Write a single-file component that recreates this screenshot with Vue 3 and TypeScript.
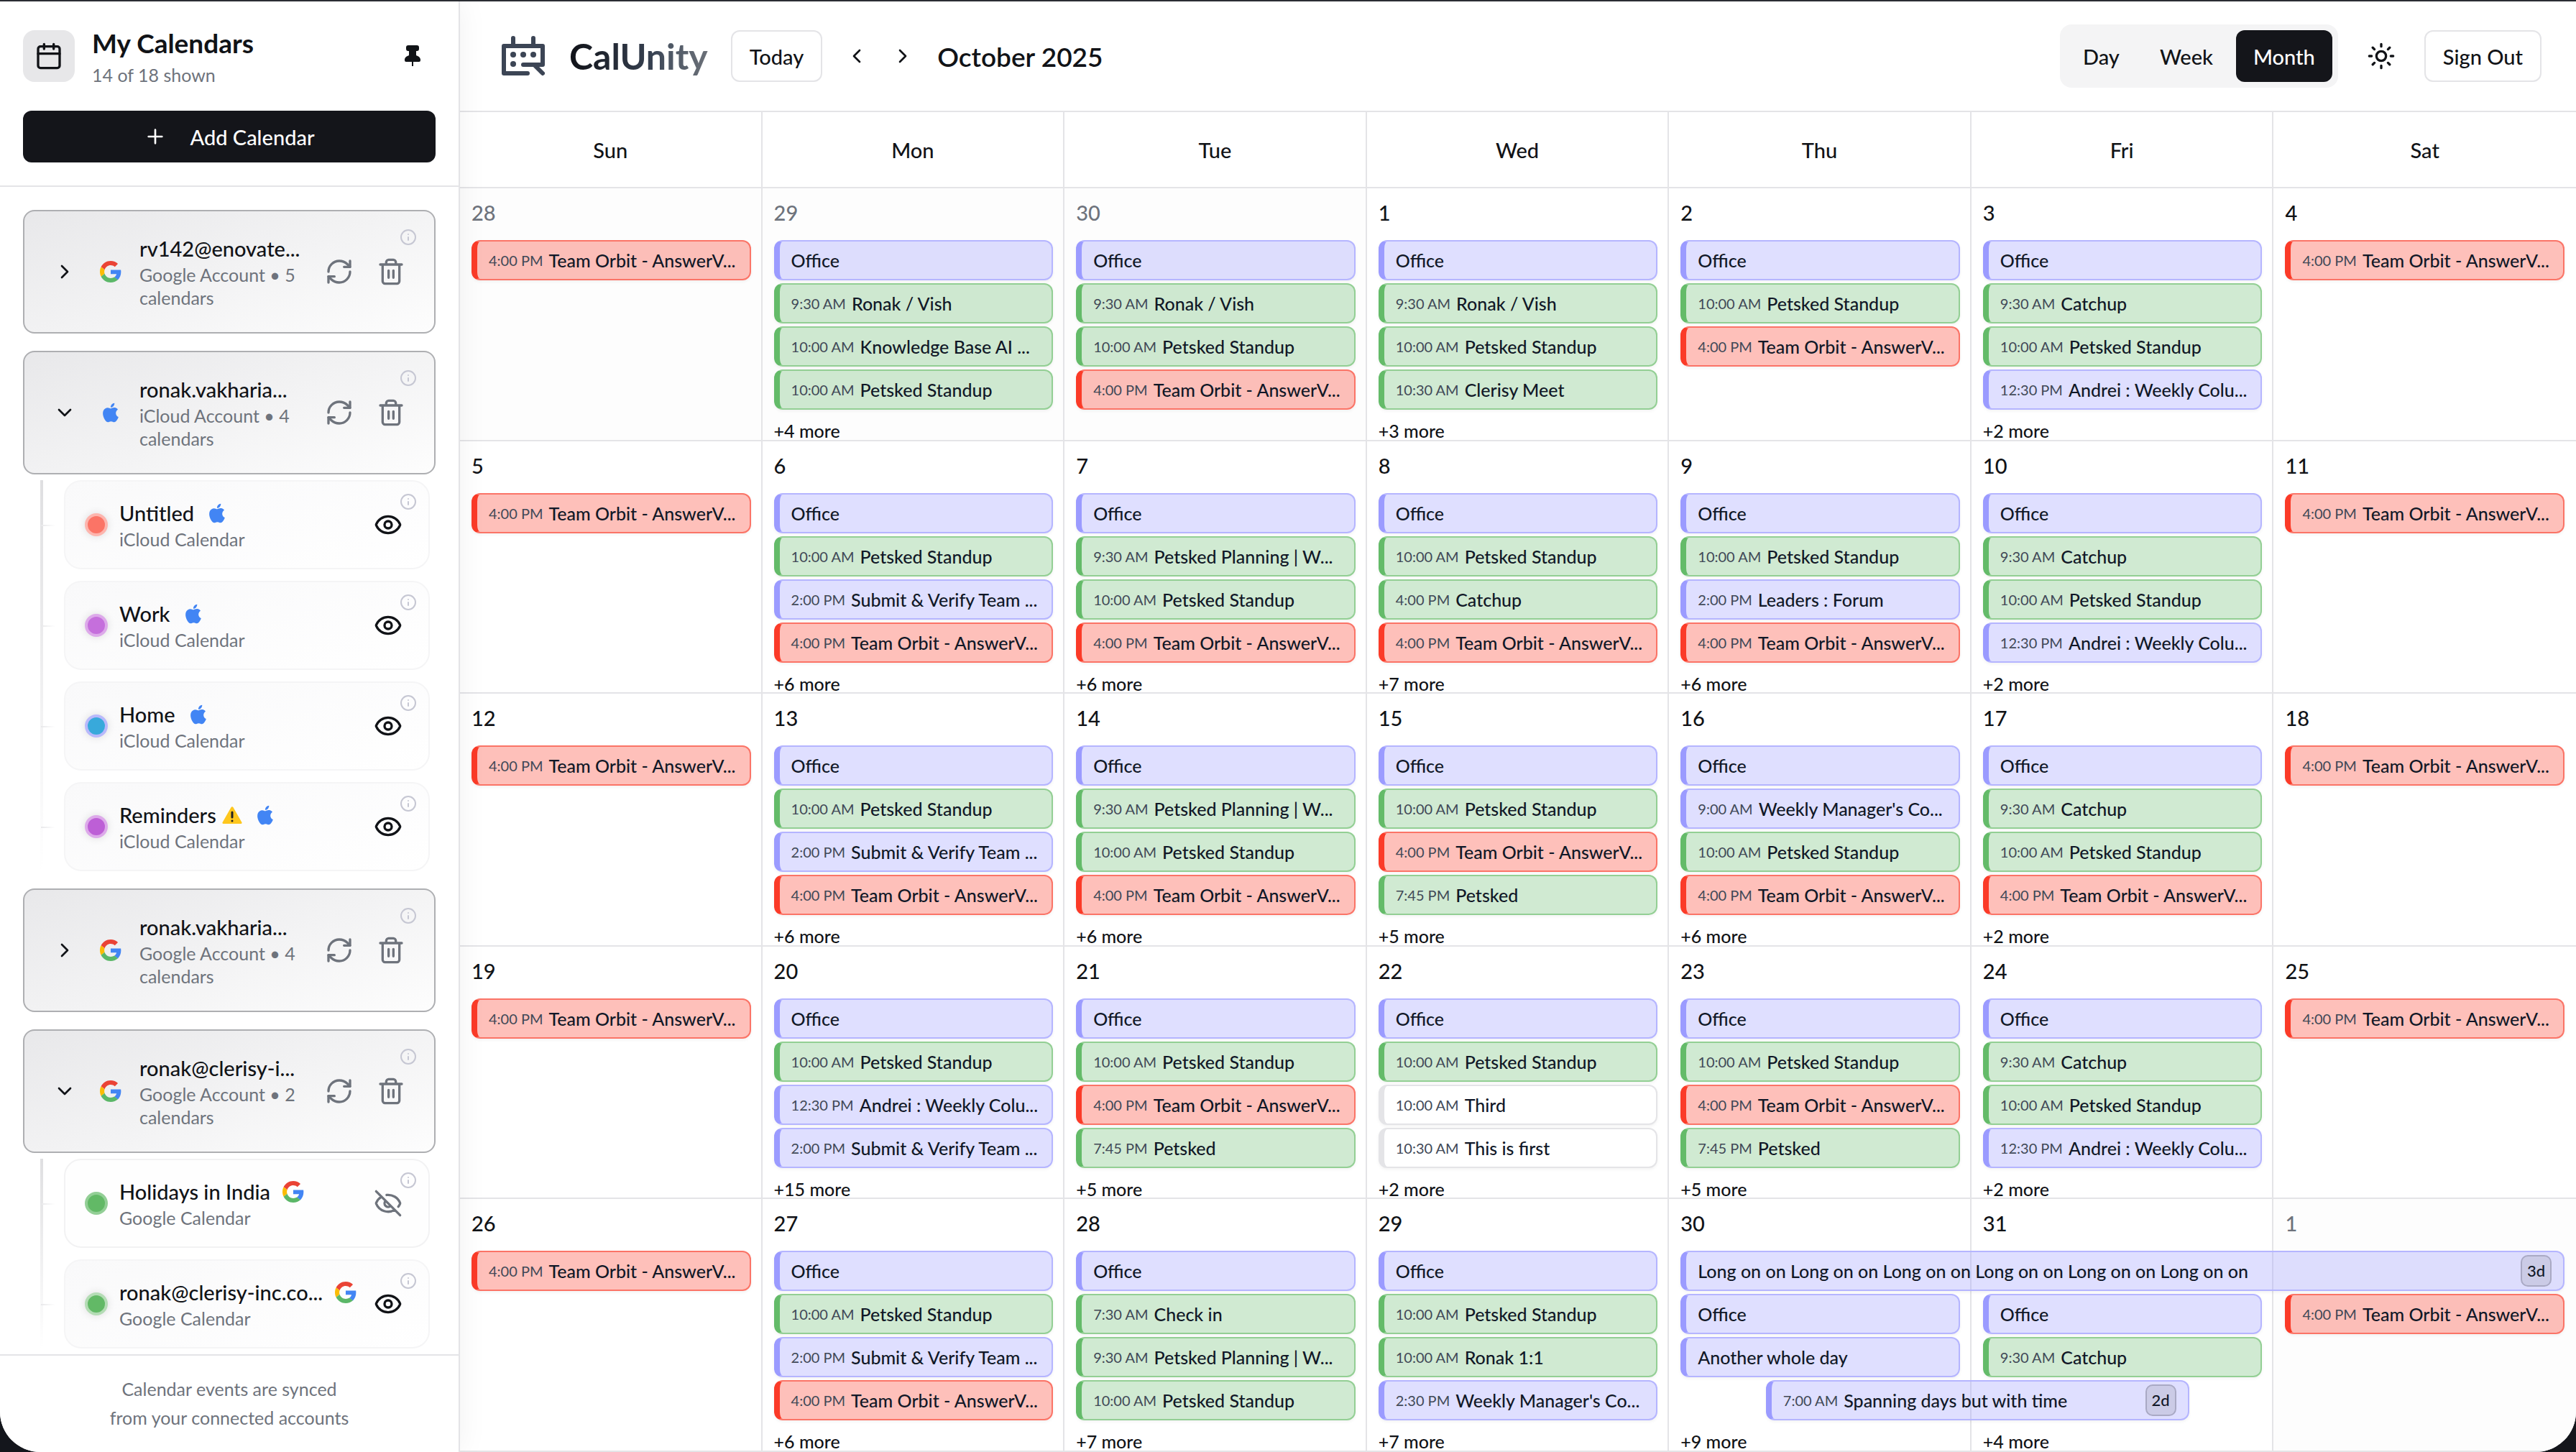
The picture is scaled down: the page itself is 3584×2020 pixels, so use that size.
<script setup lang="ts">
type Tone = 'red' | 'violet' | 'green' | 'plain'
type Provider = 'google' | 'apple'

interface CalendarEvent {
  title: string
  time?: string
  tone: Tone
  col: number
  row: number
  span?: number
  badge?: string
  partial?: boolean
}
interface Day {
  label: string
  more?: string
  outside?: boolean
}
interface Week {
  days: Day[]
  events: CalendarEvent[]
}
interface SubCalendar {
  name: string
  kind: string
  provider: Provider
  color: string
  halo: string
  visible: boolean
  warning?: boolean
}
interface Account {
  name: string
  detail: string
  provider: Provider
  open: boolean
  calendars: SubCalendar[]
}

const apple = (name: string, color: string, halo: string, warning = false): SubCalendar => ({
  name, kind: 'iCloud Calendar', provider: 'apple', color, halo, visible: true, warning,
})

const accounts: Account[] = [
  { name: 'rv142@enovate...', detail: 'Google Account • 5 calendars', provider: 'google', open: false, calendars: [] },
  {
    name: 'ronak.vakharia...', detail: 'iCloud Account • 4 calendars', provider: 'apple', open: true,
    calendars: [
      apple('Untitled', '#fb7466', '#fdb5ae'),
      apple('Work', '#c56fdc', '#dda9ea'),
      apple('Home', '#38a9db', '#b9b9fb'),
      apple('Reminders', '#bd5fd6', '#dda9ea', true),
    ],
  },
  { name: 'ronak.vakharia...', detail: 'Google Account • 4 calendars', provider: 'google', open: false, calendars: [] },
  {
    name: 'ronak@clerisy-i...', detail: 'Google Account • 2 calendars', provider: 'google', open: true,
    calendars: [
      { name: 'Holidays in India', kind: 'Google Calendar', provider: 'google', color: '#62b966', halo: '#93cf96', visible: false },
      { name: 'ronak@clerisy-inc.co...', kind: 'Google Calendar', provider: 'google', color: '#62b966', halo: '#b4dcb5', visible: true },
    ],
  },
]

const weekdays = ['Sun', 'Mon', 'Tue', 'Wed', 'Thu', 'Fri', 'Sat']
const views = ['Day', 'Week', 'Month']

const tones: Record<string, Tone> = { r: 'red', v: 'violet', g: 'green', p: 'plain' }

// Each entry reads "tone|time|title"; an all-day entry leaves the time empty.
// Only the first two bars separate fields, so a title may hold one itself.
const column = (col: number, lines: string[], firstRow = 2): CalendarEvent[] =>
  lines.map((line, i) => {
    const [tone, time, ...title] = line.split('|')
    return { tone: tones[tone], time, title: title.join('|'), col, row: firstRow + i }
  })

const parse = (lists: string[][]): CalendarEvent[] => lists.flatMap((list, i) => column(i + 1, list))

const office = 'v||Office'
const orbit = 'r|4:00 PM|Team Orbit - AnswerV...'
const standup = 'g|10:00 AM|Petsked Standup'
const vish = 'g|9:30 AM|Ronak / Vish'
const verify = 'v|2:00 PM|Submit & Verify Team ...'
const planning = 'g|9:30 AM|Petsked Planning | W...'
const catchup = 'g|9:30 AM|Catchup'
const andrei = 'v|12:30 PM|Andrei : Weekly Colu...'
const petsked = 'g|7:45 PM|Petsked'

const days = (first: number, more: string[]): Day[] =>
  more.map((text, i) => ({ label: String(first + i), more: text ? `+${text} more` : undefined }))

const weeks: Week[] = [
  {
    days: [
      { label: '28', outside: true },
      { label: '29', outside: true, more: '+4 more' },
      { label: '30', outside: true },
      ...days(1, ['3', '', '2', '']),
    ],
    events: parse([
      [orbit],
      [office, vish, 'g|10:00 AM|Knowledge Base AI ...', standup],
      [office, vish, standup, orbit],
      [office, vish, standup, 'g|10:30 AM|Clerisy Meet'],
      [office, standup, orbit],
      [office, catchup, standup, andrei],
      [orbit],
    ]),
  },
  {
    days: days(5, ['', '6', '6', '7', '6', '2', '']),
    events: parse([
      [orbit],
      [office, standup, verify, orbit],
      [office, planning, standup, orbit],
      [office, standup, 'g|4:00 PM|Catchup', orbit],
      [office, standup, 'v|2:00 PM|Leaders : Forum', orbit],
      [office, catchup, standup, andrei],
      [orbit],
    ]),
  },
  {
    days: days(12, ['', '6', '6', '5', '6', '2', '']),
    events: parse([
      [orbit],
      [office, standup, verify, orbit],
      [office, planning, standup, orbit],
      [office, standup, orbit, petsked],
      [office, "v|9:00 AM|Weekly Manager's Co...", standup, orbit],
      [office, catchup, standup, orbit],
      [orbit],
    ]),
  },
  {
    days: days(19, ['', '15', '5', '2', '5', '2', '']),
    events: parse([
      [orbit],
      [office, standup, andrei, verify],
      [office, standup, orbit, petsked],
      [office, standup, 'p|10:00 AM|Third', 'p|10:30 AM|This is first'],
      [office, standup, orbit, petsked],
      [office, catchup, standup, andrei],
      [orbit],
    ]),
  },
  {
    days: [...days(26, ['', '6', '7', '7', '9', '4']), { label: '1', outside: true }],
    events: [
      ...parse([
        [orbit],
        [office, standup, verify, orbit],
        [office, 'g|7:30 AM|Check in', planning, standup],
        [office, standup, 'g|10:00 AM|Ronak 1:1', "v|2:30 PM|Weekly Manager's Co..."],
      ]),
      { tone: 'violet', title: 'Long on on Long on on Long on on Long on on Long on on Long on on', col: 5, row: 2, span: 3, badge: '3d' },
      ...column(5, [office, 'v||Another whole day'], 3),
      ...column(6, [office, catchup], 3),
      ...column(7, [orbit], 3),
      { tone: 'violet', time: '7:00 AM', title: 'Spanning days but with time', col: 5, row: 5, span: 2, badge: '2d', partial: true },
    ],
  },
]
</script>

<template>
  <div class="window">
    <aside class="sidebar">
      <header class="side-head">
        <div class="side-title">
          <span class="title-icon">
            <svg class="i40" viewBox="0 0 24 24"><rect x="3" y="4" width="18" height="18" rx="2" /><path d="M3 10h18M8 2v4M16 2v4" /></svg>
          </span>
          <div class="title-text">
            <h2>My Calendars</h2>
            <p>14 of 18 shown</p>
          </div>
          <button class="pin" aria-label="Pin sidebar">
            <svg viewBox="0 0 22 30"><path d="M5 0h12a3 3 0 0 1 3 3v2a3 3 0 0 1-3 3h-1v6c3 1 6 3 6 6v1a2 2 0 0 1-2 2H2a2 2 0 0 1-2-2v-1c0-3 3-5 6-6V8H5a3 3 0 0 1-3-3V3a3 3 0 0 1 3-3z" /><path d="M10 22h2v7h-2z" /></svg>
          </button>
        </div>
        <button class="add">
          <svg class="i32" viewBox="0 0 24 24"><path d="M5 12h14M12 5v14" /></svg>
          <span>Add Calendar</span>
        </button>
      </header>

      <div class="accounts">
        <section v-for="(account, a) in accounts" :key="a">
          <div class="account">
            <button class="toggle" aria-label="Toggle account">
              <svg class="i32" viewBox="0 0 24 24"><path :d="account.open ? 'm6 9 6 6 6-6' : 'm9 18 6-6-6-6'" /></svg>
            </button>
            <span class="brand">
              <svg v-if="account.provider === 'google'" class="google" viewBox="0 0 48 48"><path fill="#ea4335" d="M24 9.5c3.54 0 6.71 1.22 9.21 3.6l6.85-6.85C35.9 2.38 30.47 0 24 0 14.62 0 6.51 5.38 2.56 13.22l7.98 6.19C12.43 13.72 17.74 9.5 24 9.5z" /><path fill="#4285f4" d="M46.98 24.55c0-1.57-.15-3.09-.38-4.55H24v9.02h12.94c-.58 2.96-2.26 5.48-4.78 7.18l7.73 6c4.51-4.18 7.09-10.36 7.09-17.65z" /><path fill="#fbbc05" d="M10.53 28.59c-.48-1.45-.76-2.99-.76-4.59s.27-3.14.76-4.59l-7.98-6.19C.92 16.46 0 20.12 0 24c0 3.88.92 7.54 2.56 10.78l7.97-6.19z" /><path fill="#5bb768" d="M24 48c6.48 0 11.93-2.13 15.89-5.81l-7.73-6c-2.15 1.45-4.92 2.3-8.16 2.3-6.26 0-11.57-4.22-13.47-9.91l-7.98 6.19C6.51 42.62 14.62 48 24 48z" /></svg>
              <svg v-else class="apple" viewBox="0 0 24 24"><path d="M18.71 19.5c-.83 1.24-1.71 2.45-3.05 2.47-1.34.03-1.77-.79-3.29-.79-1.53 0-2 .77-3.27.82-1.31.05-2.3-1.32-3.14-2.53C4.25 17 2.94 12.45 4.7 9.39c.87-1.52 2.43-2.48 4.12-2.51 1.28-.02 2.5.87 3.29.87.78 0 2.26-1.07 3.81-.91.65.03 2.47.26 3.64 1.98-.09.06-2.17 1.28-2.15 3.81.03 3.02 2.65 4.03 2.68 4.04-.03.07-.42 1.44-1.38 2.83M13 3.5c.73-.83 1.94-1.46 2.94-1.5.13 1.17-.34 2.35-1.04 3.19-.69.85-1.83 1.51-2.95 1.42-.15-1.15.41-2.35 1.05-3.11z" /></svg>
            </span>
            <div class="account-text">
              <h3>{{ account.name }}</h3>
              <p>{{ account.detail }}</p>
            </div>
            <button class="icon-btn" aria-label="Refresh account">
              <svg class="i40" viewBox="0 0 24 24"><path d="M3 12a9 9 0 0 1 9-9 9.75 9.75 0 0 1 6.74 2.74L21 8" /><path d="M21 3v5h-5" /><path d="M21 12a9 9 0 0 1-9 9 9.75 9.75 0 0 1-6.74-2.74L3 16" /><path d="M8 16H3v5" /></svg>
            </button>
            <button class="icon-btn" aria-label="Remove account">
              <svg class="i40" viewBox="0 0 24 24"><path d="M3 6h18M19 6v14c0 1-1 2-2 2H7c-1 0-2-1-2-2V6M8 6V4c0-1 1-2 2-2h4c1 0 2 1 2 2v2M10 11v6M14 11v6" /></svg>
            </button>
            <svg class="info" viewBox="0 0 24 24"><circle cx="12" cy="12" r="10" /><path d="M12 16v-4M12 8h.01" /></svg>
          </div>
          <ul v-if="account.open" class="children">
            <li v-for="cal in account.calendars" :key="cal.name" class="child" :class="{ muted: !cal.visible }">
              <span class="dot" :style="{ background: cal.color, borderColor: cal.halo }"></span>
              <div class="child-text">
                <div class="child-name">
                  <span>{{ cal.name }}</span>
                  <svg v-if="cal.warning" class="warning" viewBox="0 0 28 24"><path fill="#fec71e" d="M12.6 1a1.6 1.6 0 0 1 2.8 0l12 21a1.3 1.3 0 0 1-1.2 2H1.8a1.3 1.3 0 0 1-1.2-2z" /><path stroke="#222" stroke-width="3" stroke-linecap="round" d="M14 8v7M14 20h.01" /></svg>
                  <span class="brand">
                    <svg v-if="cal.provider === 'google'" class="google" viewBox="0 0 48 48"><path fill="#ea4335" d="M24 9.5c3.54 0 6.71 1.22 9.21 3.6l6.85-6.85C35.9 2.38 30.47 0 24 0 14.62 0 6.51 5.38 2.56 13.22l7.98 6.19C12.43 13.72 17.74 9.5 24 9.5z" /><path fill="#4285f4" d="M46.98 24.55c0-1.57-.15-3.09-.38-4.55H24v9.02h12.94c-.58 2.96-2.26 5.48-4.78 7.18l7.73 6c4.51-4.18 7.09-10.36 7.09-17.65z" /><path fill="#fbbc05" d="M10.53 28.59c-.48-1.45-.76-2.99-.76-4.59s.27-3.14.76-4.59l-7.98-6.19C.92 16.46 0 20.12 0 24c0 3.88.92 7.54 2.56 10.78l7.97-6.19z" /><path fill="#5bb768" d="M24 48c6.48 0 11.93-2.13 15.89-5.81l-7.73-6c-2.15 1.45-4.92 2.3-8.16 2.3-6.26 0-11.57-4.22-13.47-9.91l-7.98 6.19C6.51 42.62 14.62 48 24 48z" /></svg>
                    <svg v-else class="apple" viewBox="0 0 24 24"><path d="M18.71 19.5c-.83 1.24-1.71 2.45-3.05 2.47-1.34.03-1.77-.79-3.29-.79-1.53 0-2 .77-3.27.82-1.31.05-2.3-1.32-3.14-2.53C4.25 17 2.94 12.45 4.7 9.39c.87-1.52 2.43-2.48 4.12-2.51 1.28-.02 2.5.87 3.29.87.78 0 2.26-1.07 3.81-.91.65.03 2.47.26 3.64 1.98-.09.06-2.17 1.28-2.15 3.81.03 3.02 2.65 4.03 2.68 4.04-.03.07-.42 1.44-1.38 2.83M13 3.5c.73-.83 1.94-1.46 2.94-1.5.13 1.17-.34 2.35-1.04 3.19-.69.85-1.83 1.51-2.95 1.42-.15-1.15.41-2.35 1.05-3.11z" /></svg>
                  </span>
                </div>
                <p>{{ cal.kind }}</p>
              </div>
              <button class="eye" aria-label="Toggle visibility">
                <svg v-if="cal.visible" class="i40" viewBox="0 0 24 24"><path d="M2.062 12.348a1 1 0 0 1 0-.696 10.75 10.75 0 0 1 19.876 0 1 1 0 0 1 0 .696 10.75 10.75 0 0 1-19.876 0" /><circle cx="12" cy="12" r="3" /></svg>
                <svg v-else class="i40" viewBox="0 0 24 24"><path d="M10.733 5.076a10.744 10.744 0 0 1 11.205 6.575 1 1 0 0 1 0 .696 10.747 10.747 0 0 1-1.444 2.49M14.084 14.158a3 3 0 0 1-4.242-4.242M17.479 17.499a10.75 10.75 0 0 1-15.417-5.151 1 1 0 0 1 0-.696 10.75 10.75 0 0 1 4.446-5.143M2 2l20 20" /></svg>
              </button>
              <svg class="info" viewBox="0 0 24 24"><circle cx="12" cy="12" r="10" /><path d="M12 16v-4M12 8h.01" /></svg>
            </li>
          </ul>
        </section>
      </div>

      <footer class="side-foot">Calendar events are synced<br />from your connected accounts</footer>
    </aside>

    <main class="main">
      <header class="topbar">
        <svg class="logo" viewBox="0 0 60 56"><path d="M36 52H3V14h54v26H30M46 41l11 11M16 3v10M44 3v10" /><g><circle cx="16" cy="26" r="4" /><circle cx="30" cy="26" r="4" /><circle cx="44" cy="26" r="4" /><circle cx="16" cy="39" r="4" /></g></svg>
        <h1>CalUnity</h1>
        <button class="outline">Today</button>
        <div class="pager">
          <button aria-label="Previous month"><svg class="i32" viewBox="0 0 24 24"><path d="m15 18-6-6 6-6" /></svg></button>
          <button aria-label="Next month"><svg class="i32" viewBox="0 0 24 24"><path d="m9 18 6-6-6-6" /></svg></button>
        </div>
        <h2>October 2025</h2>
        <nav class="views">
          <button v-for="view in views" :key="view" :class="{ active: view === 'Month' }">{{ view }}</button>
        </nav>
        <button class="theme" aria-label="Theme">
          <svg class="i40" viewBox="0 0 24 24"><circle cx="12" cy="12" r="4" /><path d="M12 2v2M12 20v2M4.93 4.93l1.41 1.41M17.66 17.66l1.41 1.41M2 12h2M20 12h2M6.34 17.66l-1.41 1.41M19.07 4.93l-1.41 1.41" /></svg>
        </button>
        <button class="outline">Sign Out</button>
      </header>

      <div class="weekdays">
        <span v-for="name in weekdays" :key="name">{{ name }}</span>
      </div>

      <div class="weeks">
        <div v-for="(week, w) in weeks" :key="w" class="week">
          <div v-for="(day, d) in week.days" :key="'cell' + d" class="cell" :class="{ outside: day.outside }" :style="{ gridColumn: d + 1 }">
            <span class="date">{{ day.label }}</span>
          </div>
          <button
            v-for="(event, e) in week.events"
            :key="'event' + e"
            class="event"
            :class="[event.tone, { partial: event.partial }]"
            :style="{ gridRow: event.row, gridColumn: `${event.col} / span ${event.span ?? 1}` }"
          >
            <span v-if="event.time" class="time">{{ event.time }}</span>
            <span class="name">{{ event.title }}</span>
            <span v-if="event.badge" class="badge">{{ event.badge }}</span>
          </button>
          <template v-for="(day, d) in week.days" :key="'more' + d">
            <button v-if="day.more" class="more" :style="{ gridColumn: d + 1 }">{{ day.more }}</button>
          </template>
        </div>
      </div>
    </main>
  </div>
</template>

<style>
body {
  margin: 0;
  background: #14161c;
}
</style>

<style scoped>
.window {
  box-sizing: border-box;
  display: flex;
  height: 100vh;
  overflow: hidden;
  border-top: 2px solid #2b2d33;
  border-radius: 0 0 56px 56px;
  background: #fff;
  color: #111317;
  font-family: Lato, "Open Sans", sans-serif;
  font-size: 29px;
  font-weight: 500;
}
.window *,
.window *::before {
  box-sizing: border-box;
}
h1, h2, h3, p, ul {
  margin: 0;
  padding: 0;
}
button {
  padding: 0;
  border: 0;
  background: none;
  color: inherit;
  font: inherit;
}
svg {
  display: block;
  flex: none;
}
.i32, .i40, .info {
  fill: none;
  stroke: currentColor;
  stroke-width: 2;
  stroke-linecap: round;
  stroke-linejoin: round;
}
.i32 { width: 32px; height: 32px; }
.i40 { width: 40px; height: 40px; }

.sidebar {
  position: relative;
  z-index: 1;
  display: flex;
  flex: none;
  flex-direction: column;
  width: 640px;
  border-right: 2px solid #e4e4e7;
  background: #fff;
  box-shadow: 0 0 40px rgba(0, 0, 0, 0.06);
}
.side-head {
  padding: 34px 32px 32px;
  border-bottom: 2px solid #e4e4e7;
}
.side-title {
  display: flex;
  align-items: center;
  margin-bottom: 34px;
}
.title-icon {
  display: grid;
  place-items: center;
  width: 72px;
  height: 72px;
  border-radius: 16px;
  background: #e7e7e9;
}
.title-text {
  display: grid;
  flex: 1;
  gap: 4px;
  margin-left: 24px;
}
.title-text h2 {
  font-size: 37px;
  font-weight: 700;
  line-height: 48px;
}
p {
  color: #6e737c;
  font-size: 25px;
  font-weight: 400;
  line-height: 32px;
}
.pin {
  padding: 0 21px;
}
.pin svg {
  width: 22px;
  height: 30px;
  fill: #111317;
}
.add {
  display: flex;
  align-items: center;
  justify-content: center;
  gap: 32px;
  width: 100%;
  height: 72px;
  border-radius: 12px;
  background: #14151a;
  color: #fff;
}
.accounts {
  display: flex;
  flex: 1;
  flex-direction: column;
  gap: 24px;
  min-height: 0;
  padding: 32px 32px 0;
  overflow: hidden;
}
.account {
  position: relative;
  display: flex;
  align-items: center;
  padding: 32px 40px;
  border: 2px solid #aeafb2;
  border-radius: 16px;
  background: linear-gradient(160deg, #e8e8ea, #fdfdfd);
}
.brand {
  display: grid;
  flex: none;
  place-items: center;
  width: 32px;
  height: 32px;
}
.account > .brand {
  margin: 0 24px 0 32px;
}
.google {
  width: 30px;
  height: 30px;
}
.apple {
  width: 32px;
  height: 32px;
  fill: #4285f4;
}
.account-text {
  flex: 1;
  min-width: 0;
}
.account-text p {
  width: 220px;
}
h3, .child-name {
  font-size: 29px;
  font-weight: 500;
  line-height: 40px;
  white-space: nowrap;
}
.icon-btn {
  margin-left: 32px;
  color: #6e737c;
}
.info {
  position: absolute;
  top: 24px;
  right: 24px;
  width: 24px;
  height: 24px;
  color: #c6c7d3;
}
.children {
  position: relative;
  display: flex;
  flex-direction: column;
  gap: 16px;
  margin: 8px 8px 0 24px;
  padding-left: 33px;
  list-style: none;
}
.children::before {
  content: "";
  position: absolute;
  top: 0;
  bottom: 0;
  left: 0;
  width: 4px;
  background: linear-gradient(#dfdfe1, rgba(223, 223, 225, 0));
}
.child {
  position: relative;
  display: flex;
  align-items: center;
  padding: 24px 36px 24px 27px;
  border: 2px solid #f5f5f6;
  border-radius: 24px;
  background: linear-gradient(160deg, #f9f9fa, #fff);
}
.child.muted {
  border-color: #f2f2f3;
  background: #fefefe;
}
.child::before {
  content: "";
  position: absolute;
  top: 60px;
  left: -34px;
  width: 20px;
  height: 2px;
  background: linear-gradient(90deg, #e8e8ea, #fff);
}
.child .info {
  top: 16px;
  right: 16px;
}
.dot {
  flex: none;
  width: 32px;
  height: 32px;
  margin-right: 16px;
  border: 4px solid;
  border-radius: 50%;
  background-clip: padding-box;
  box-shadow: 0 0 12px rgba(0, 0, 0, 0.12);
}
.muted .dot {
  box-shadow: none;
}
.child-text {
  flex: 1;
  min-width: 0;
}
.child-name {
  display: flex;
  align-items: center;
}
.child-name .brand {
  margin-left: 16px;
}
.warning {
  width: 28px;
  height: 24px;
  margin-left: 8px;
}
.muted .eye {
  color: #6e737c;
}
.side-foot {
  flex: none;
  padding: 26px 32px 28px;
  border-top: 2px solid #e4e4e7;
  color: #6e737c;
  font-size: 25px;
  font-weight: 400;
  line-height: 40px;
  text-align: center;
}

.main {
  display: flex;
  flex: 1;
  flex-direction: column;
  min-width: 0;
}
.topbar {
  display: flex;
  flex: none;
  align-items: center;
  height: 154px;
  padding: 0 48px 0 58px;
  border-bottom: 2px solid #e4e4e7;
}
.logo {
  width: 60px;
  height: 56px;
  margin-right: 34px;
  fill: none;
  stroke: #3c4555;
  stroke-width: 6;
  stroke-linecap: round;
  stroke-linejoin: round;
}
.logo g {
  fill: #3c4555;
  stroke: none;
}
h1 {
  margin-right: 32px;
  background: linear-gradient(90deg, #101218, #374151 60%, #4b5563 70%, #6b7078);
  background-clip: text;
  color: transparent;
  font-size: 50px;
  font-weight: 700;
  line-height: 64px;
}
.outline {
  height: 72px;
  padding: 0 24px;
  border: 2px solid #e4e4e7;
  border-radius: 12px;
}
.pager {
  display: flex;
  margin: 0 16px;
}
.pager button {
  display: grid;
  place-items: center;
  width: 64px;
  height: 64px;
}
.topbar h2 {
  flex: 1;
  font-size: 37px;
  font-weight: 600;
}
.views {
  display: flex;
  gap: 8px;
  padding: 8px;
  border-radius: 16px;
  background: #f4f4f5;
}
.views button {
  height: 72px;
  padding: 0 24px;
  border-radius: 12px;
}
.views .active {
  background: #14151a;
  color: #fff;
}
.theme {
  margin: 0 40px;
}
.weekdays {
  display: grid;
  flex: none;
  grid-template-columns: repeat(7, 1fr);
  height: 106px;
  border-bottom: 2px solid #e4e4e7;
}
.weekdays span {
  display: grid;
  place-items: center;
  border-right: 2px solid #e4e4e7;
}
.weekdays span:last-child,
.cell:nth-child(7) {
  border-right: 0;
}
.weeks {
  display: grid;
  flex: 1;
  grid-template-rows: repeat(5, 1fr);
  min-height: 0;
}
.week {
  display: grid;
  grid-template-rows: 68px repeat(4, 56px) 1fr;
  grid-template-columns: repeat(7, minmax(0, 1fr));
  row-gap: 4px;
  min-height: 0;
  overflow: hidden;
  border-bottom: 2px solid #e4e4e7;
}
.cell {
  grid-row: 1 / -1;
  padding: 14px 16px;
  border-right: 2px solid #e4e4e7;
}
.outside {
  background: #fdfdfd;
  color: #6e737c;
}
.date {
  display: block;
  line-height: 40px;
}
.event {
  display: flex;
  align-items: center;
  gap: 8px;
  min-width: 0;
  margin: 0 16px;
  padding: 0 16px;
  overflow: hidden;
  border: 2px solid;
  border-left-width: 8px;
  border-radius: 12px;
  color: #111827;
  font-size: 25px;
  text-align: left;
  white-space: nowrap;
  box-shadow: 0 2px 4px rgba(0, 0, 0, 0.05);
}
.event.partial {
  margin: 0 14% 0 16%;
}
.red {
  border-color: #fb7467;
  border-left-color: #fb3b28;
  background: rgba(251, 59, 40, 0.32);
}
.violet {
  border-color: #b5b5ff;
  border-left-color: #9b9bff;
  background: rgba(155, 155, 255, 0.32);
}
.green {
  border-color: #93cf94;
  border-left-color: #64bb69;
  background: rgba(100, 187, 105, 0.3);
}
.plain {
  border-color: #e4e4e7;
  background: #fff;
}
.time {
  color: #414957;
  font-size: 20px;
  font-weight: 400;
}
.badge {
  margin-left: auto;
  padding: 0 7px;
  border: 2px solid #a9a9c4;
  border-radius: 10px;
  background: #cbcbe6;
  font-size: 22px;
  line-height: 40px;
}
.more {
  grid-row: 6;
  margin: 12px 16px 0;
  font-size: 25px;
  line-height: 26px;
  text-align: left;
}
</style>
